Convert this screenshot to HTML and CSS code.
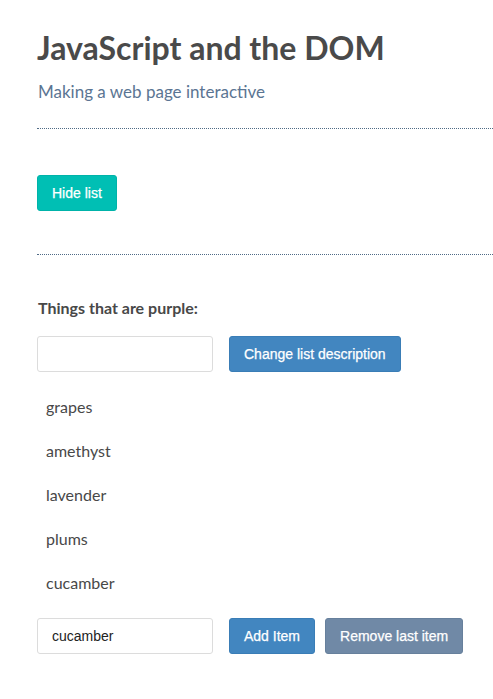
FILE: index.html
```html
<!DOCTYPE html>
<html lang="en">
<head>
<meta charset="utf-8">
<title>JavaScript and the DOM</title>
<link rel="stylesheet" href="styles.css">
</head>
<body>
  <h1 class="title">JavaScript and the DOM</h1>
  <p class="subtitle">Making a web page interactive</p>
  <hr class="rule rule-top">
  <button class="btn btn-teal">Hide list</button>
  <hr class="rule rule-mid">
  <div class="list-section">
    <p class="description">Things that are purple:</p>
    <div class="row">
      <input class="field" type="text" value="">
      <button class="btn btn-blue">Change list description</button>
    </div>
    <ul class="items">
      <li>grapes</li>
      <li>amethyst</li>
      <li>lavender</li>
      <li>plums</li>
      <li>cucamber</li>
    </ul>
    <div class="row">
      <input class="field" type="text" value="cucamber">
      <button class="btn btn-blue">Add Item</button>
      <button class="btn btn-slate">Remove last item</button>
    </div>
  </div>
</body>
</html>
```
FILE: styles.css
```css
html, body {
  background: #ffffff;
}
body {
  margin: 0;
  padding: 0 0 0 37px;
  font-family: Lato, "Open Sans", sans-serif;
  color: #484848;
}
.title {
  margin: 29px 0 0;
  font-size: 32px;
  line-height: 1.2;
  font-weight: 700;
  color: #4a4a4a;
}
.subtitle {
  margin: 15px 0 0 1px;
  font-size: 17px;
  line-height: 1.2;
  color: #5b7593;
}
.rule {
  border: 0;
  border-top: 1px dotted #4f6a85;
  margin: 0;
  height: 0;
}
.rule-top {
  margin-top: 25px;
}
.btn {
  height: 36px;
  padding: 0 14px;
  border: 1px solid transparent;
  border-radius: 3px;
  font-family: "Liberation Sans", Arial, sans-serif;
  font-size: 14px;
  color: #ffffff;
  -webkit-text-stroke: 0.25px #ffffff;
  cursor: pointer;
}
.btn-teal {
  display: block;
  margin: 46px 0 0;
  background: #00bfb4;
  border-color: #00b3a9;
}
.rule-mid {
  margin-top: 43px;
}
.description {
  margin: 43px 0 0 1px;
  font-size: 16px;
  line-height: 1.2;
  font-weight: 700;
  color: #484848;
}
.row {
  display: flex;
  align-items: center;
  margin-top: 19px;
}
.row .btn + .btn {
  margin-left: 10px;
}
.field {
  box-sizing: border-box;
  width: 176px;
  height: 36px;
  margin: 0 16px 0 0;
  padding: 0 14px;
  border: 1px solid #dcdcdc;
  border-radius: 3px;
  font-family: "Liberation Sans", Arial, sans-serif;
  font-size: 14px;
  color: #222222;
  background: #ffffff;
}
.btn-blue {
  background: #4286c0;
  border-color: #3a7db6;
}
.btn-slate {
  background: #7089a6;
  border-color: #67809c;
}
.items {
  list-style: none;
  margin: 13px 0 0;
  padding: 0 0 0 9px;
}
.items li {
  font-size: 16px;
  line-height: 24px;
  padding: 10px 0;
  color: #484848;
}
.items + .row {
  margin-top: 13px;
}
```
